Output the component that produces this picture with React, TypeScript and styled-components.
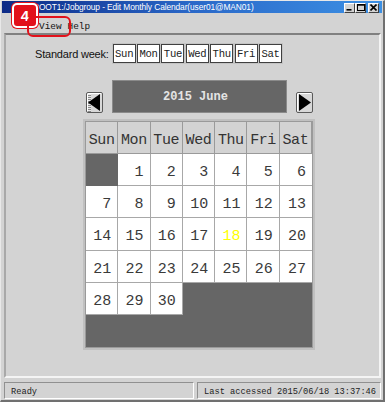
import React from "react";
import styled, { createGlobalStyle } from "styled-components";

const GlobalStyle = createGlobalStyle`
  html, body {
    margin: 0;
    padding: 0;
    background: #ffffff;
  }
  * {
    box-sizing: border-box;
  }
`;

const Window = styled.div`
  position: relative;
  width: 385px;
  height: 402px;
  background: #d3d3d3;
  border-top: 1px solid #e8e8e8;
  border-left: 1px solid #e8e8e8;
  border-right: 2px solid #707070;
  border-bottom: 2px solid #707070;
  display: flex;
  flex-direction: column;
  font-family: "Liberation Sans", Arial, sans-serif;
`;

const TitleBar = styled.div`
  height: 12px;
  margin: 0 1px;
  background: linear-gradient(90deg, #0c2a86 0%, #2a68c8 50%, #3c90e4 100%);
  display: flex;
  align-items: center;
  justify-content: space-between;
  padding: 0 3px 0 31px;
`;

const TitleText = styled.span`
  color: #ffffff;
  font-family: "Liberation Sans", Arial, sans-serif;
  font-size: 8.4px;
  white-space: nowrap;
  letter-spacing: -0.1px;
`;

const Controls = styled.div`
  display: flex;
  margin-top: 1px;
`;

const CtrlButton = styled.div<{ $gap?: boolean }>`
  width: 11px;
  height: 10px;
  margin-left: ${(p) => (p.$gap ? "2px" : "0")};
  background: #d3d3d3;
  border-top: 1px solid #ffffff;
  border-left: 1px solid #ffffff;
  border-right: 1px solid #404040;
  border-bottom: 1px solid #404040;
  display: flex;
  align-items: center;
  justify-content: center;
`;

const MenuBar = styled.div`
  height: 20px;
  display: flex;
  align-items: center;
  padding-left: 38px;
  gap: 6px;
  font-family: "Liberation Mono", "Courier New", monospace;
  font-size: 9.4px;
  color: #111;
  padding-top: 6px;
`;

const MenuItem = styled.span``;

const Callout = styled.div`
  position: absolute;
  left: 26px;
  top: 15px;
  width: 44px;
  height: 21px;
  border: 2px solid #e2111b;
  border-radius: 6px;
`;

const Badge = styled.div`
  position: absolute;
  left: 11px;
  top: 2px;
  width: 26px;
  height: 25px;
  background: #e2111b;
  border: 2px solid #ffffff;
  border-radius: 5px;
  box-shadow: 0 0 0 1px #e2111b;
  color: #ffffff;
  font-family: "Liberation Sans", Arial, sans-serif;
  font-weight: bold;
  font-size: 15px;
  display: flex;
  align-items: center;
  justify-content: center;
`;

const Content = styled.div`
  height: 345px;
  margin: 0 2px 0 3px;
  border-top: 2px solid #808080;
  border-left: 2px solid #a8a8a8;
  border-right: 2px solid #f4f4f4;
  border-bottom: 2px solid #f4f4f4;
  background: #d3d3d3;
  display: flex;
  flex-direction: column;
`;

const WeekRow = styled.div`
  display: flex;
  align-items: center;
  margin: 9px 0 0 29px;
  height: 19px;
`;

const WeekLabel = styled.span`
  font-size: 11px;
  color: #111;
  margin-right: 3px;
  letter-spacing: -0.2px;
`;

const WeekBoxes = styled.div`
  display: flex;
  gap: 1.4px;
  padding: 1px;
  background: #c4c4c4;
`;

const WeekBox = styled.div`
  width: 23px;
  height: 19px;
  background: #ffffff;
  border: 1px solid #404040;
  font-family: "Liberation Mono", "Courier New", monospace;
  font-size: 10.6px;
  color: #222;
  display: flex;
  align-items: center;
  justify-content: center;
  letter-spacing: -0.3px;
`;

const NavRow = styled.div`
  display: flex;
  align-items: flex-end;
  gap: 9px;
  margin: 17px 0 0 80px;
`;

const ArrowButton = styled.div<{ $dotted?: boolean }>`
  width: 17px;
  height: 21px;
  background: #d8d8d8;
  border: 1px solid #5a5a5a;
  border-radius: 2px;
  display: flex;
  align-items: center;
  justify-content: center;
  box-shadow: inset 1px 1px 0 #ffffff;
  ${(p) =>
    p.$dotted &&
    `background-image: repeating-linear-gradient(0deg, #888 0 1px, #e8e8e8 1px 2px);
     background-size: 3px 100%;
     background-repeat: no-repeat;
     background-position: 1px 0;`}
`;

const MonthHeader = styled.div`
  width: 175px;
  height: 33px;
  background: #666666;
  border: 1px solid #8a8a8a;
  color: #e4e4e4;
  font-family: "Liberation Mono", "Courier New", monospace;
  font-weight: bold;
  font-size: 12px;
  display: flex;
  align-items: center;
  justify-content: center;
  padding-right: 8px;
`;

const Calendar = styled.div`
  margin: 8px 0 0 79px;
  width: 228px;
  height: 227px;
  display: grid;
  grid-template-columns: repeat(7, 1fr);
  grid-template-rows: repeat(7, 1fr);
  background: #666666;
  border: 1px solid #9a9a9a;
  box-shadow: 0 0 0 2px #c0c0c0;
`;

const HeadCell = styled.div`
  background: #d3d3d3;
  border-right: 1px solid #9a9a9a;
  border-bottom: 1px solid #9a9a9a;
  font-family: "Liberation Mono", "Courier New", monospace;
  font-size: 15px;
  color: #333;
  display: flex;
  align-items: center;
  justify-content: center;
  padding-top: 6px;
  letter-spacing: -0.4px;
  &:last-child {
    border-right: none;
  }
`;

const DayCell = styled.div<{ $today?: boolean; $last?: boolean }>`
  background: #ffffff;
  border-right: ${(p) => (p.$last ? "none" : "1px solid #a8a8a8")};
  border-bottom: 1px solid #a8a8a8;
  font-family: "Liberation Mono", "Courier New", monospace;
  font-size: 15px;
  color: ${(p) => (p.$today ? "#ffff00" : "#3a3a3a")};
  display: flex;
  align-items: center;
  justify-content: flex-end;
  padding: 6px 6px 0 0;
`;

const EmptyCell = styled.div``;

const StatusBar = styled.div`
  display: flex;
  gap: 3px;
  margin: 4px 2px 0 3px;
  height: 17px;
`;

const StatusPanel = styled.div<{ $w: number }>`
  width: ${(p) => p.$w}px;
  height: 17px;
  border-top: 1px solid #909090;
  border-left: 1px solid #909090;
  border-right: 1px solid #ffffff;
  border-bottom: 1px solid #ffffff;
  font-family: "Liberation Mono", "Courier New", monospace;
  font-size: 8.7px;
  color: #222;
  display: flex;
  align-items: center;
  padding-left: 6px;
  padding-top: 2px;
`;

const days = ["Sun", "Mon", "Tue", "Wed", "Thu", "Fri", "Sat"];

const Triangle = ({ dir }: { dir: "left" | "right" }) => (
  <svg width="13" height="17" viewBox="0 0 13 17">
    {dir === "left" ? (
      <polygon points="0,8.5 12,0 12,17" fill="#000" />
    ) : (
      <polygon points="13,8.5 1,0 1,17" fill="#000" />
    )}
  </svg>
);

export default function App() {
  // June 2015 starts on a Monday
  const cells: (number | null)[] = [];
  const start = 1;
  for (let i = 0; i < 42; i++) {
    const d = i - start + 1;
    cells.push(d >= 1 && d <= 30 ? d : null);
  }

  return (
    <>
      <GlobalStyle />
      <Window>
        <TitleBar>
          <TitleText>ROOT1:/Jobgroup - Edit Monthly Calendar(user01@MAN01)</TitleText>
          <Controls>
            <CtrlButton>
              <svg width="7" height="7" viewBox="0 0 7 7">
                <rect x="0.5" y="5" width="5" height="1.6" fill="#000" />
              </svg>
            </CtrlButton>
            <CtrlButton>
              <svg width="8" height="7" viewBox="0 0 8 7">
                <rect x="0.5" y="0.5" width="7" height="6" fill="none" stroke="#000" />
                <rect x="0.5" y="0.5" width="7" height="1.2" fill="#000" />
              </svg>
            </CtrlButton>
            <CtrlButton $gap>
              <svg width="7" height="7" viewBox="0 0 7 7">
                <path d="M0.5 0.5 L6.5 6.5 M6.5 0.5 L0.5 6.5" stroke="#000" strokeWidth="1.6" />
              </svg>
            </CtrlButton>
          </Controls>
        </TitleBar>
        <MenuBar>
          <MenuItem>View</MenuItem>
          <MenuItem>Help</MenuItem>
        </MenuBar>
        <Content>
          <WeekRow>
            <WeekLabel>Standard week:</WeekLabel>
            <WeekBoxes>
              {days.map((d) => (
                <WeekBox key={d}>{d}</WeekBox>
              ))}
            </WeekBoxes>
          </WeekRow>
          <NavRow>
            <ArrowButton $dotted>
              <Triangle dir="left" />
            </ArrowButton>
            <MonthHeader>2015 June</MonthHeader>
            <ArrowButton>
              <Triangle dir="right" />
            </ArrowButton>
          </NavRow>
          <Calendar>
            {days.map((d) => (
              <HeadCell key={d}>{d}</HeadCell>
            ))}
            {cells.map((d, i) =>
              d === null ? (
                <EmptyCell key={i} />
              ) : (
                <DayCell key={i} $today={d === 18} $last={i % 7 === 6}>
                  {d}
                </DayCell>
              )
            )}
          </Calendar>
        </Content>
        <StatusBar>
          <StatusPanel $w={190}>Ready</StatusPanel>
          <StatusPanel $w={184}>Last accessed 2015/06/18 13:37:46</StatusPanel>
        </StatusBar>
        <Badge>4</Badge>
        <Callout />
      </Window>
    </>
  );
}
